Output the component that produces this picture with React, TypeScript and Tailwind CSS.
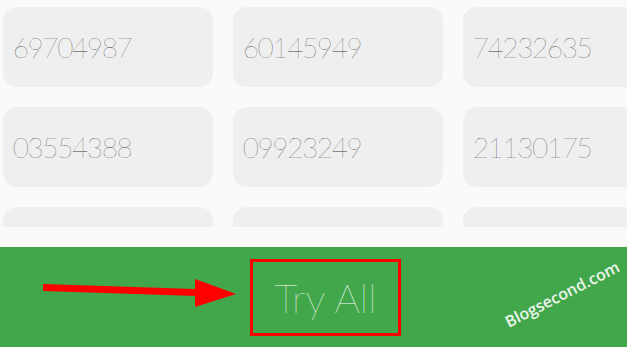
import React from "react";

const rows = [
  ["69704987", "60145949", "74232635"],
  ["03554388", "09923249", "21130175"],
  ["", "", ""],
];

export default function App() {
  return (
    <div className="w-[627px] h-[347px] bg-[#fafafa] overflow-hidden flex flex-col antialiased" style={{ fontFamily: "Lato, 'Noto Sans', sans-serif" }}>
      <div className="h-[227px] overflow-hidden pl-[3px] pt-[7px]">
        <div className="grid grid-cols-[210px_210px_210px] gap-[20px]">
          {rows.flat().map((n, i) => (
            <div key={i} className="h-[80px] rounded-[14px] bg-[#efefef] flex items-center">
              <div className="w-[138px] text-center text-[28px] font-thin tracking-[-1.4px] text-[#3a3a3a] leading-none">{n}</div>
            </div>
          ))}
        </div>
      </div>
      <div className="h-[20px]" />
      <div className="relative h-[100px] bg-[#42a74b] pl-[250px] pt-[12px]">
        <div className="w-[151px] h-[77px] border-[3px] border-[#ff0000] flex items-center justify-center">
          <span className="text-[40px] font-thin text-white leading-none">Try All</span>
        </div>
        <svg className="absolute left-0 top-0" width="627" height="100" viewBox="0 0 627 100">
          <polygon points="43,37 196,42 196,49 43,44" fill="#ff0000" />
          <polygon points="195,32 236,47 195,60" fill="#ff0000" />
        </svg>
        <div
          className="absolute left-[499px] top-[35px] w-[126px] text-center text-[16px] font-semibold text-white/90 whitespace-nowrap"
          style={{ transform: "rotate(-27deg)", fontFamily: "'Open Sans', sans-serif" }}
        >
          Blogsecond.com
        </div>
      </div>
    </div>
  );
}
